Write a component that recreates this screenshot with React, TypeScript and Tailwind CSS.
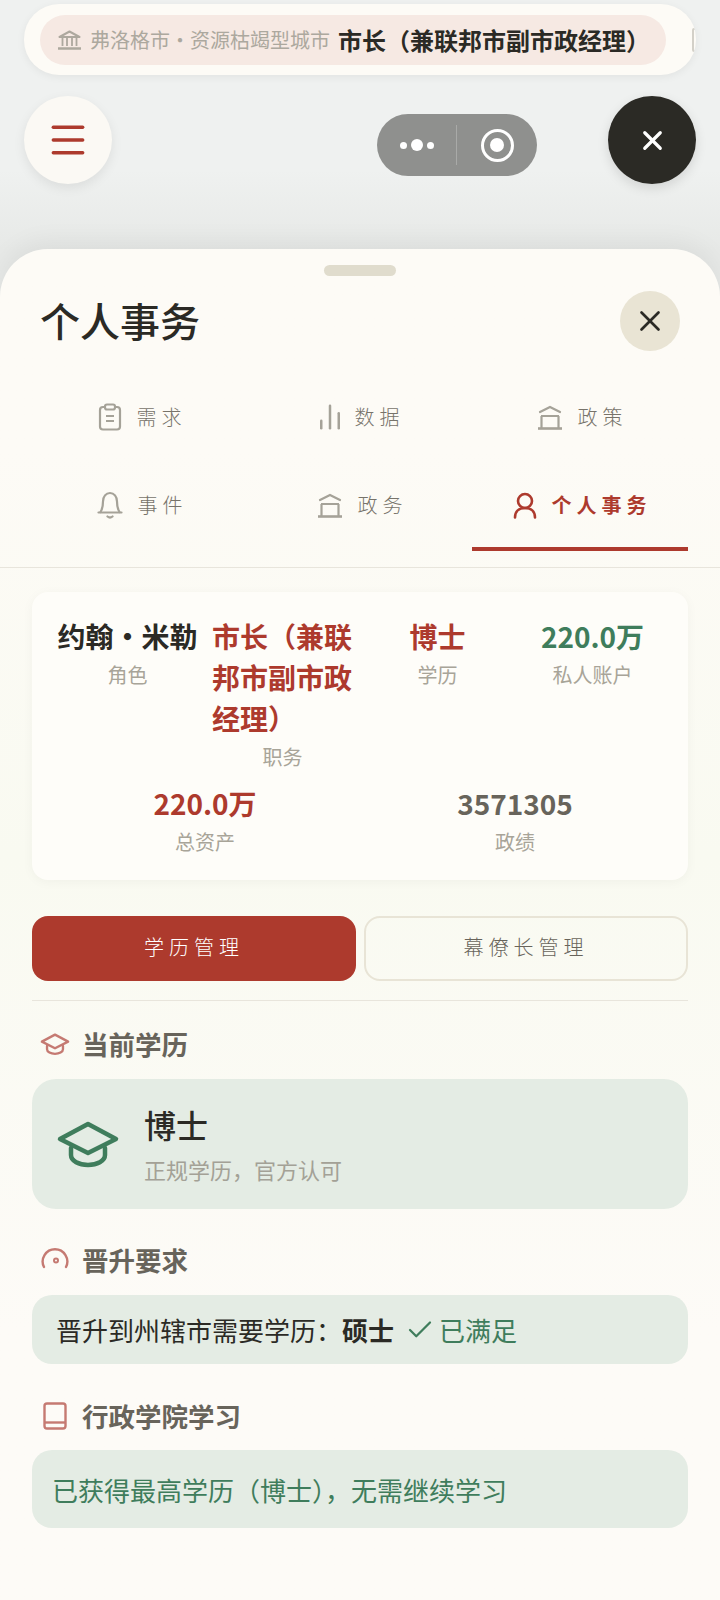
import React from 'react';
import { BarChart2, Check, Menu, X } from 'lucide-react';

interface TabProps {
  label: string;
  icon: React.ReactNode;
  active?: boolean;
}

const Tab: React.FC<TabProps> = ({ label, icon, active }) => (
  <div className={`h-[88px] pl-[4px] flex items-center justify-center gap-[15px] border-b-[4px] ${active ? 'border-[#ad3a2d] text-[#ad3a2d]' : 'border-transparent text-[#77736a]'}`}>
    {icon}
    <span className={`text-[20px] tracking-[5px] ${active ? 'font-bold' : 'font-light'}`}>{label}</span>
  </div>
);

const Stat: React.FC<{ value: string; label: string; color: string }> = ({ value, label, color }) => (
  <div className="flex flex-col items-center text-center min-w-0">
    <div className={`text-[28px] leading-[41px] font-bold ${color}`}>{value}</div>
    <div className="text-[20px] leading-[30px] mt-[3px] text-[#a8a498]">{label}</div>
  </div>
);

const SectionTitle: React.FC<{ icon: React.ReactNode; title: string }> = ({ icon, title }) => (
  <div className="flex items-center gap-[12px] px-[8px] h-[40px]">
    <div className="w-[30px] flex items-center justify-center">{icon}</div>
    <span className="text-[26.5px] font-bold text-[#68645b]">{title}</span>
  </div>
);

// icons that lucide doesn't have in this shape
const CapIcon: React.FC<{ size: number; sw?: number; className?: string }> = ({ size, sw = 4.5, className }) => (
  <svg width={size} height={size} viewBox="0 0 64 64" fill="none" stroke="currentColor" strokeWidth={sw} strokeLinejoin="round" strokeLinecap="round" className={className}>
    <path d="M32 12 L60 27 L32 41 L4 27 Z" />
    <path d="M15 36 V43 C15 49 23 53 32 53 C41 53 49 49 49 43 V36" />
  </svg>
);

const RoofIcon: React.FC = () => (
  <svg width="26" height="25" viewBox="0 0 26 25" fill="none" stroke="#a5a298" strokeWidth="2.2" className="shrink-0">
    <path d="M3 7 L13 2 L23 7" strokeLinecap="round" />
    <path d="M4 11 H22 M4.5 11 V23 M21.5 11 V23" />
    <path d="M1 23.5 H25" strokeWidth="2.6" />
  </svg>
);

const ClipIcon: React.FC = () => (
  <svg width="24" height="28" viewBox="0 0 24 28" fill="none" stroke="#a5a298" strokeWidth="2.2" className="shrink-0">
    <rect x="2" y="4" width="20" height="22.5" rx="3" />
    <rect x="7" y="1.5" width="10" height="5" rx="2" fill="#fdfbf6" />
    <path d="M8 13 H16 M8 18 H16" />
  </svg>
);

const BellIcon: React.FC = () => (
  <svg width="26" height="28" viewBox="0 0 26 28" fill="none" stroke="#a5a298" strokeWidth="2.2" strokeLinecap="round" className="shrink-0">
    <path d="M3.5 21 C5.5 18 6 15 6 10.5 C6 5.5 9 2 13 2 C17 2 20 5.5 20 10.5 C20 15 20.5 18 22.5 21" />
    <path d="M1.5 21.5 H24.5" />
    <path d="M10.5 25.5 Q13 27.5 15.5 25.5" />
  </svg>
);

const UserIcon: React.FC = () => (
  <svg width="24" height="27" viewBox="0 0 24 27" fill="none" stroke="currentColor" strokeWidth="2.6" strokeLinecap="round" className="shrink-0">
    <circle cx="12" cy="9" r="7" />
    <path d="M2 25.5 C2 19.5 6 16 12 16 C18 16 22 19.5 22 25.5" />
  </svg>
);

const GaugeIcon: React.FC = () => (
  <svg width="28" height="22" viewBox="0 0 28 22" fill="none" stroke="#c57a72" strokeWidth="2.4" strokeLinecap="round" className="-mt-[4px]">
    <path d="M3 20 A12.3 12.3 0 1 1 25 20" />
    <circle cx="15" cy="13.5" r="2" strokeWidth="2" />
  </svg>
);

const BookIcon: React.FC = () => (
  <svg width="24" height="28" viewBox="0 0 24 28" fill="none" stroke="#c57a72" strokeWidth="2.4">
    <rect x="1.5" y="1.5" width="21" height="25" rx="2.5" />
    <path d="M1.5 20.5 H22.5" />
  </svg>
);

const BankIcon: React.FC = () => (
  <svg width="25" height="20" viewBox="0 0 25 20" fill="none" stroke="#ada89e" strokeWidth="2" className="shrink-0">
    <path d="M2.5 7 L12.5 1.5 L22.5 7 Z" strokeLinejoin="round" />
    <path d="M5.5 8 V16 M10 8 V16 M15 8 V16 M19.5 8 V16" strokeWidth="1.8" />
    <path d="M1 18.5 H24" strokeWidth="2.4" />
  </svg>
);

const App: React.FC = () => {
  return (
    <div className='flex flex-col w-[720px] h-[1600px] overflow-hidden bg-gradient-to-b from-[#eff1f0] from-[170px] to-[#e7e9e7] to-[250px] font-["Noto_Sans_CJK_SC","Noto_Sans",sans-serif]'>
      {/* top bar */}
      <div className="shrink-0 ml-[24px] mt-[4px] w-[672px] h-[71px] rounded-[35px] bg-[#fdfbf6] shadow-[0_2px_8px_rgba(0,0,0,0.06)] overflow-hidden flex items-center pl-[16px]">
        <div className="w-[626px] shrink-0 h-[50px] rounded-[25px] bg-[#f6e9e3] flex items-center pl-[17px] whitespace-nowrap">
          <BankIcon />
          <span className="ml-[8px] text-[20px] text-[#aca89e]">弗洛格市・资源枯竭型城市</span>
          <span className="ml-[8px] text-[24px] font-bold text-[#2b2a25]">市长（兼联邦市副市政经理）</span>
        </div>
        <div className="ml-[26px] shrink-0 w-[14px] h-[24px] border-2 border-[#d3d0c8] rounded-[2px]" />
      </div>

      {/* floating buttons */}
      <div className="shrink-0 mt-[21px] px-[24px] flex items-start">
        <div className="w-[88px] h-[88px] rounded-full bg-[#fbf9f4] shadow-[0_4px_12px_rgba(0,0,0,0.08)] flex items-center justify-center">
          <Menu size={44} strokeWidth={1.9} className="text-[#ad3a2d]" />
        </div>
        <div className="ml-auto mr-[71px] mt-[18px] w-[160px] h-[62px] rounded-[31px] bg-[#8f908e] flex items-center">
          <div className="w-[79px] flex items-center justify-center gap-[4px]">
            <span className="w-[7px] h-[7px] rounded-full bg-white" />
            <span className="w-[12px] h-[12px] rounded-full bg-white" />
            <span className="w-[7px] h-[7px] rounded-full bg-white" />
          </div>
          <div className="w-px h-[40px] bg-[#a9aaa8]" />
          <div className="flex-1 flex items-center justify-center">
            <div className="w-[33px] h-[33px] rounded-full border-[3px] border-white flex items-center justify-center">
              <div className="w-[14px] h-[14px] rounded-full bg-white" />
            </div>
          </div>
        </div>
        <div className="w-[88px] h-[88px] rounded-full bg-[#2b2a25] shadow-[0_4px_12px_rgba(0,0,0,0.12)] flex items-center justify-center">
          <X size={31} strokeWidth={2.5} className="text-white" />
        </div>
      </div>

      {/* sheet */}
      <div className="flex-1 mt-[65px] rounded-t-[48px] bg-gradient-to-b from-[#fdfbf6] from-15% via-[#f9faf1] via-45% to-[#fdfbf7] to-80% shadow-[0_-8px_24px_rgba(0,0,0,0.05)]">
        <div className="flex justify-center pt-[16px]">
          <div className="w-[72px] h-[11px] rounded-full bg-[#e0dccd]" />
        </div>
        <div className="flex items-center justify-between px-[40px] mt-[15px] h-[60px]">
          <h1 className="text-[40px] font-medium text-[#2b2a25] -mt-[2px]">个人事务</h1>
          <div className="w-[60px] h-[60px] rounded-full bg-[#e9e4d4] flex items-center justify-center">
            <X size={34} strokeWidth={1.9} className="text-[#2b2a25]" />
          </div>
        </div>

        <div className="mt-[24px] border-b border-[#e8e5dc] px-[32px] pb-[16px] grid grid-cols-3 gap-x-[4px]">
          <Tab label="需求" icon={<ClipIcon />} />
          <Tab label="数据" icon={<BarChart2 size={30} strokeWidth={2} className="text-[#a5a298] -mx-[5px]" />} />
          <Tab label="政策" icon={<RoofIcon />} />
          <Tab label="事件" icon={<BellIcon />} />
          <Tab label="政务" icon={<RoofIcon />} />
          <Tab label="个人事务" active icon={<UserIcon />} />
        </div>

        <div className="px-[32px] pt-[24px]">
          {/* stats */}
          <div className="h-[288px] rounded-[16px] bg-[#fefdf9] shadow-[0_2px_12px_rgba(0,0,0,0.04)] px-[25px] pt-[24px]">
            <div className="grid grid-cols-4 gap-x-[14px]">
              <Stat value="约翰・米勒" label="角色" color="text-[#2b2a25] whitespace-nowrap" />
              <Stat value="市长（兼联邦市副市政经理）" label="职务" color="text-[#ad3a2d] text-left" />
              <Stat value="博士" label="学历" color="text-[#ad3a2d]" />
              <Stat value="220.0万" label="私人账户" color="text-[#3f7d5c]" />
            </div>
            <div className="grid grid-cols-2 gap-x-[14px] mt-[11px]">
              <Stat value="220.0万" label="总资产" color="text-[#ad3a2d]" />
              <Stat value="3571305" label="政绩" color="text-[#68645b]" />
            </div>
          </div>

          {/* sub tabs */}
          <div className="grid grid-cols-2 gap-[8px] mt-[36px]">
            <div className="h-[65px] pb-[4px] rounded-[16px] bg-[#ad3a2d] text-white flex items-center justify-center text-[20px] font-light tracking-[5px]">学历管理</div>
            <div className="h-[65px] pb-[4px] rounded-[16px] border-2 border-[#e8e4d6] text-[#68645b] flex items-center justify-center text-[20px] font-light tracking-[5px]">幕僚长管理</div>
          </div>
          <div className="h-px bg-[#e8e5dc] mt-[19px]" />

          <div className="mt-[23px]">
            <SectionTitle icon={<CapIcon size={30} sw={5} className="text-[#c57a72]" />} title="当前学历" />
          </div>
          <div className="mt-[15px] h-[130px] rounded-[24px] bg-[#e4ece4] flex items-center pl-[24px] gap-[24px]">
            <CapIcon size={64} className="text-[#3f7d5c]" />
            <div>
              <div className="text-[32px] leading-[44px] font-medium text-[#2b2a25]">博士</div>
              <div className="text-[22px] leading-[36px] mt-[5px] text-[#a3a196]">正规学历，官方认可</div>
            </div>
          </div>

          <div className="mt-[31px]">
            <SectionTitle icon={<GaugeIcon />} title="晋升要求" />
          </div>
          <div className="mt-[15px] h-[69px] rounded-[20px] bg-[#e4ece4] flex items-center pl-[24px] text-[26px] text-[#2b2a25] whitespace-nowrap">
            <span>晋升到州辖市需要学历：</span>
            <span className="font-bold">硕士</span>
            <Check size={30} strokeWidth={1.8} className="ml-[11px] text-[#3f7d5c]" />
            <span className="ml-[4px] text-[#3f7d5c]">已满足</span>
          </div>

          <div className="mt-[32px]">
            <SectionTitle icon={<BookIcon />} title="行政学院学习" />
          </div>
          <div className="mt-[14px] h-[78px] rounded-[20px] bg-[#e4ece4] flex items-center pl-[20px] text-[26px] text-[#3f7d5c]">
            已获得最高学历（博士），无需继续学习
          </div>
        </div>
      </div>
    </div>
  );
};

export default App;
